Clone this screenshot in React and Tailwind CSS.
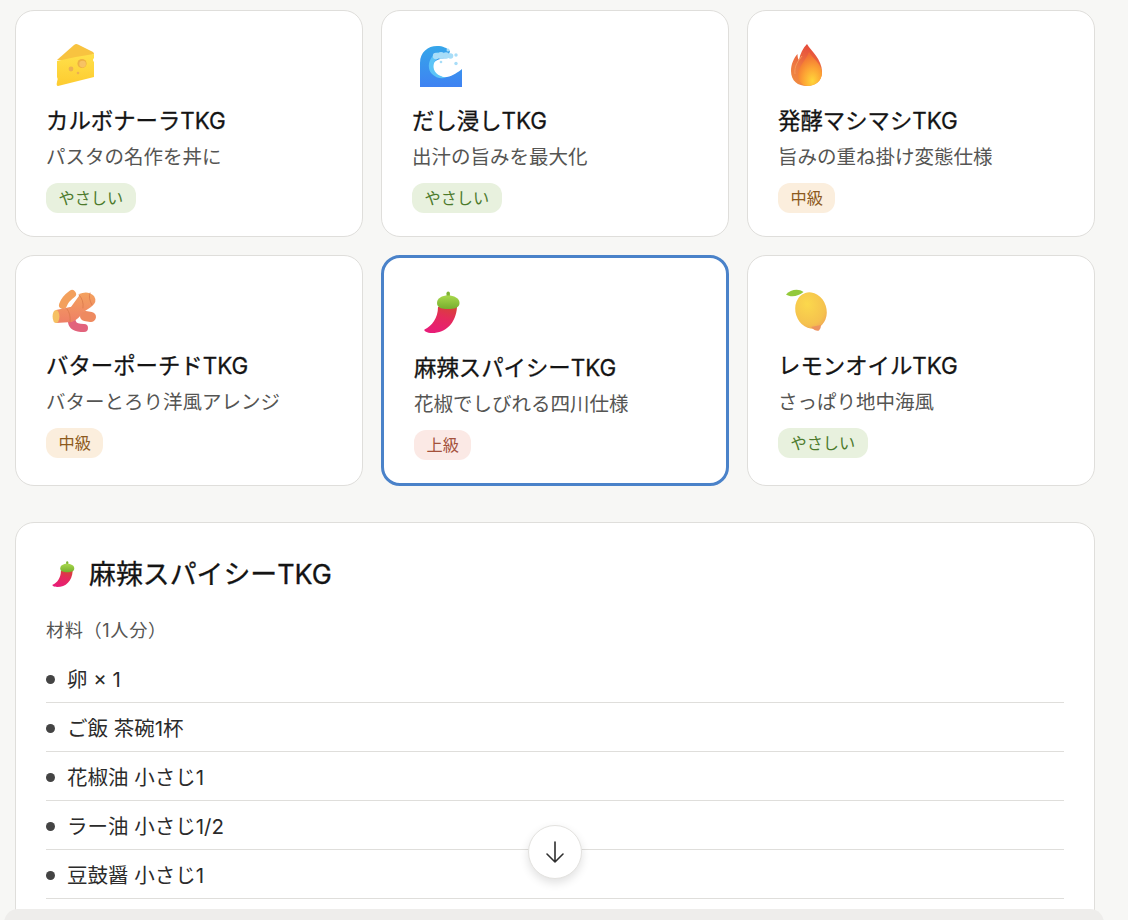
import React from 'react'

const FONT = "font-['Inter','Noto_Sans_CJK_JP',sans-serif]"

// Hand drawn 3D-style emoji, all on a 58x58 box
const Cheese = ({ size = 58 }) => (
  <svg width={size} height={size} viewBox="0 0 58 58" className="block">
    <defs>
      <linearGradient id="cheeseFront" x1="0" y1="0" x2="0" y2="1">
        <stop offset="0" stopColor="#ffe04a" />
        <stop offset="1" stopColor="#fdcb30" />
      </linearGradient>
    </defs>
    <path d="M11 24 L28 9 Q30 7.500 32 8.500 L47 16 Q48 17 48 18 L30 26 Z" fill="#f8c340" />
    <path
      d="M11 25 Q30 20.500 48 18 V22 Q46 24 48 26 V41 L12 50 Q10 50 11 46 Q12.500 43 11 41 Z"
      fill="url(#cheeseFront)"
    />
    <circle cx="36" cy="27.500" r="4.600" fill="#eeb043" />
    <circle cx="36.600" cy="28.100" r="3.300" fill="#f7c264" />
    <circle cx="25" cy="33" r="2.400" fill="#ecb052" />
    <circle cx="32" cy="37" r="1.300" fill="#ecb052" />
  </svg>
)

const Wave = ({ size = 58 }) => (
  <svg width={size} height={size} viewBox="0 0 58 58" className="block">
    <defs>
      <linearGradient id="waveBody" x1="0" y1="0" x2="0" y2="1">
        <stop offset="0" stopColor="#35a6ea" />
        <stop offset="1" stopColor="#3f82f2" />
      </linearGradient>
    </defs>
    <path
      d="M8 51 V27 C8 16 16 10 25 10 C31 10 35 12 38 15 L36 22 C28 22 20 25 20 31 C21 38 28 42 35 41 C41 40 46 36 50 33 V51 Z"
      fill="url(#waveBody)"
    />
    <path d="M26 16 C17 20 14 32 20 38 C24 42 29 43 35 41.500 C29 41 22 38 21.500 31 C21.500 25 25 22 30 21 Z" fill="#5cc4f7" />
    <g fill="#a8ddf8">
      <circle cx="24" cy="20" r="3.200" />
      <circle cx="29" cy="19.500" r="3.400" />
      <circle cx="34" cy="19.500" r="3.200" />
      <circle cx="38.500" cy="20" r="2.800" />
      <circle cx="44" cy="19" r="1.700" />
      <circle cx="36" cy="14" r="1.500" />
      <circle cx="44" cy="27.500" r="1.700" />
      <circle cx="29" cy="26" r="1.300" />
    </g>
  </svg>
)

const Flame = ({ size = 58 }) => (
  <svg width={size} height={size} viewBox="0 0 58 58" className="block">
    <defs>
      <linearGradient id="flameBack" x1="0.6" y1="0" x2="0.3" y2="1">
        <stop offset="0" stopColor="#e5483a" />
        <stop offset="0.6" stopColor="#ee7a42" />
        <stop offset="1" stopColor="#f08a40" />
      </linearGradient>
      <radialGradient id="flameFront" cx="0.6" cy="0.85" r="0.8">
        <stop offset="0" stopColor="#ffd63a" />
        <stop offset="0.5" stopColor="#fca234" />
        <stop offset="1" stopColor="#f06a34" />
      </radialGradient>
    </defs>
    <path
      d="M29 8 C33 15 44 23 44 36 C44 45 37 50 29 50 C20 50 13 45 13 35 C13 28 16 22 19.500 18 C19.500 21 20 23 21 24 C22 18 25 12 29 8 Z"
      fill="url(#flameBack)"
    />
    <path d="M17 38 C16 30 20 25 24 20" fill="none" stroke="#f59a5c" strokeWidth="1" />
    <path d="M31 16 C35 23 44 28 44 37 C44 45 37 50 30 50 C24 50 20 45 20 39 C20 30 27 26 31 16 Z" fill="url(#flameFront)" />
  </svg>
)

const Ginger = ({ size = 58 }) => (
  <svg width={size} height={size} viewBox="0 0 58 58" className="block" fill="none" strokeLinecap="round">
    <defs>
      <linearGradient id="gingerBody" x1="0" y1="0" x2="0" y2="1">
        <stop offset="0" stopColor="#f4a25e" />
        <stop offset="1" stopColor="#ee7f66" />
      </linearGradient>
    </defs>
    <path d="M26 41 Q27 47 38 47" stroke="#e2637c" strokeWidth="8" />
    <path d="M17 24 Q19 18 26 13" stroke="#f3a05c" strokeWidth="8" />
    <path d="M39 35 L45 36" stroke="#ee8a60" strokeWidth="10" />
    <path
      d="M10 29 L24 26 L33 13 Q42 9 48 15 Q52 21 45 26 L36 32 Q33 38 26 41 L10 42 Z"
      fill="url(#gingerBody)"
      strokeWidth="0"
    />
    <path d="M24.500 25 L32.500 14" stroke="#ffffff" strokeWidth="2" />
    <path d="M21 28 Q25 33 24 41 M33 14 Q38 19 37 27 M44 12 Q42 17 46 24" stroke="#d9784a" strokeWidth="0.8" />
    <ellipse cx="10" cy="35.500" rx="3.400" ry="6.600" fill="#f6c163" />
  </svg>
)

const Chilli = ({ size = 58 }) => (
  <svg width={size} height={size} viewBox="0 0 58 58" className="block">
    <defs>
      <linearGradient id="chilliBody" x1="0.7" y1="0" x2="0.3" y2="1">
        <stop offset="0" stopColor="#d8403c" />
        <stop offset="0.4" stopColor="#e52a5c" />
        <stop offset="1" stopColor="#e81c78" />
      </linearGradient>
      <linearGradient id="chilliCap" x1="0" y1="0" x2="0" y2="1">
        <stop offset="0" stopColor="#a8d84c" />
        <stop offset="1" stopColor="#76ae2e" />
      </linearGradient>
    </defs>
    <path d="M24 24 C24 35 18 43 10.500 46.500 C9.500 48 13 50 18 50 C32 50 42 40 43 24 Z" fill="url(#chilliBody)" />
    <rect x="32.500" y="8.500" width="3.400" height="7" rx="1.700" fill="#7fb433" />
    <path d="M23 20 C23 15 28 12.500 34 12.500 C40 12.500 45.500 15 45.500 20 C45.500 25 40 26 34 26 C28 26 23 25 23 20 Z" fill="url(#chilliCap)" />
  </svg>
)

const Lemon = ({ size = 58 }) => (
  <svg width={size} height={size} viewBox="0 0 58 58" className="block">
    <defs>
      <radialGradient id="lemonBody" cx="0.45" cy="0.3" r="0.8">
        <stop offset="0" stopColor="#fbd84c" />
        <stop offset="0.7" stopColor="#f5c24e" />
        <stop offset="1" stopColor="#f0a057" />
      </radialGradient>
    </defs>
    <path d="M8 13.500 C12 9 20 7 25.500 11 C21 15 13 17 8 13.500 Z" fill="#93c93a" />
    <ellipse cx="33" cy="29.500" rx="15.500" ry="18.500" transform="rotate(-18 33 29.500)" fill="url(#lemonBody)" />
    <path d="M33 46 Q38 51 41 49.500 Q43 48 43 44 Z" fill="#ec9460" />
  </svg>
)

const LEVELS = {
  easy: { label: 'やさしい', cls: 'bg-[#e8f1de] text-[#4c7a2c]' },
  mid: { label: '中級', cls: 'bg-[#fbeedd] text-[#8d5a1c]' },
  hard: { label: '上級', cls: 'bg-[#fbe9e5] text-[#a4523c]' },
}

const RECIPES = [
  { icon: Cheese, name: 'カルボナーラTKG', desc: 'パスタの名作を丼に', level: 'easy' },
  { icon: Wave, name: 'だし浸しTKG', desc: '出汁の旨みを最大化', level: 'easy' },
  { icon: Flame, name: '発酵マシマシTKG', desc: '旨みの重ね掛け変態仕様', level: 'mid' },
  { icon: Ginger, name: 'バターポーチドTKG', desc: 'バターとろり洋風アレンジ', level: 'mid' },
  { icon: Chilli, name: '麻辣スパイシーTKG', desc: '花椒でしびれる四川仕様', level: 'hard', selected: true },
  { icon: Lemon, name: 'レモンオイルTKG', desc: 'さっぱり地中海風', level: 'easy' },
]

const INGREDIENTS = ['卵 × 1', 'ご飯 茶碗1杯', '花椒油 小さじ1', 'ラー油 小さじ1/2', '豆鼓醤 小さじ1']

const RecipeCard = ({ recipe }) => {
  const Icon = recipe.icon
  const level = LEVELS[recipe.level]
  return (
    <div
      className={
        recipe.selected
          ? 'rounded-[19px] border-[3px] border-[#4a82c9] bg-white px-[30px] pt-[25px] pb-[23px]'
          : 'rounded-[19px] border border-[#dfdedb] bg-white px-[30px] pt-[25px] pb-[23px]'
      }
    >
      <Icon />
      <div className="mt-[12px] text-[22.4px] leading-[30px] font-normal text-[#141414] [-webkit-text-stroke:0.3px_#141414]">
        {recipe.name}
      </div>
      <div className="mt-[7px] text-[19.5px] leading-[28px] text-[#555553]">{recipe.desc}</div>
      <span className={`mt-[12px] inline-block rounded-[12px] px-[12.5px] text-[16.2px] leading-[30px] ${level.cls}`}>
        {level.label}
      </span>
    </div>
  )
}

export default function App() {
  return (
    <div className={`relative h-[920px] overflow-hidden bg-[#f7f7f5] ${FONT}`}>
      <div className="w-[1110px] px-[15px] pt-[10px]">
        <div className="grid grid-cols-3 gap-[18px]">
          {RECIPES.map(recipe => (
            <RecipeCard key={recipe.name} recipe={recipe} />
          ))}
        </div>

        {/* Detail */}
        <div className="mt-[36px] rounded-[19px] border border-[#dfdedb] bg-white px-[30px] pt-[30px] pb-[40px]">
          <div className="flex items-center gap-[7px]">
            <Chilli size={36} />
            <h2 className="text-[26.9px] leading-[42px] font-normal text-[#141414] [-webkit-text-stroke:0.3px_#141414]">
              麻辣スパイシーTKG
            </h2>
          </div>
          <div className="mt-[22px] text-[18.2px] leading-[26px] tracking-[0.6px] text-[#555553]">材料（1人分）</div>
          <ul className="mt-[11px]">
            {INGREDIENTS.map(item => (
              <li key={item} className="flex h-[49px] items-center gap-[12px] border-b border-[#dfdedb] pt-[4px] text-[20.5px] text-[#2b2b2b]">
                <span className="h-[9px] w-[9px] shrink-0 -translate-y-[1px] rounded-full bg-[#444444]" />
                {item}
              </li>
            ))}
          </ul>
        </div>
      </div>

      {/* Scroll to bottom */}
      <button className="absolute top-[825px] left-[528px] flex h-[54px] w-[54px] items-center justify-center rounded-full border border-[#e3e2df] bg-white shadow-[0_4px_10px_rgba(0,0,0,0.12)]">
        <svg width="20" height="24" viewBox="0 0 20 24" fill="none" stroke="#2f2f2f" strokeWidth="1.6" strokeLinecap="round" strokeLinejoin="round">
          <path d="M10 2 V22 M2 14 L10 22 L18 14" />
        </svg>
      </button>

      {/* Composer edge */}
      <div className="absolute top-[909px] left-[4px] h-[30px] w-[1100px] rounded-t-[14px] bg-[#eeedeb]" />
    </div>
  )
}
